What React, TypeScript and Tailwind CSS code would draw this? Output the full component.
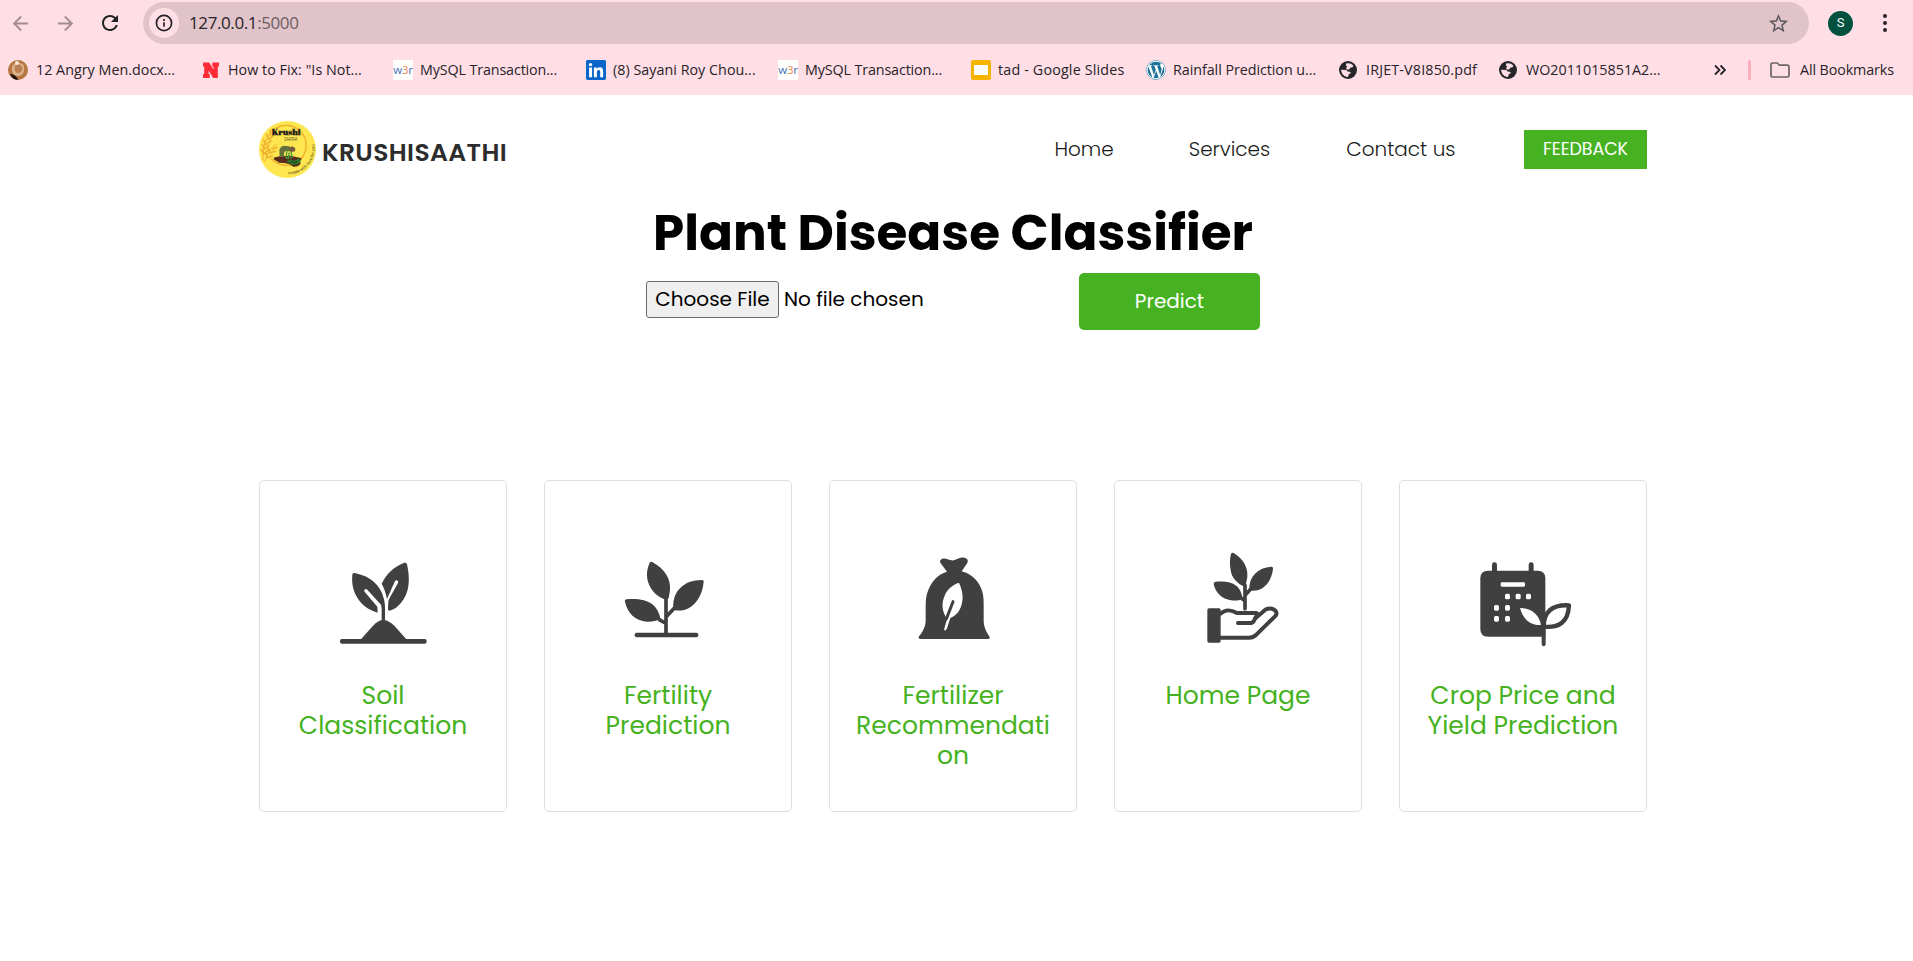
import type { ReactNode } from "react";
import { FaLinkedin, FaWordpress } from "react-icons/fa";
import { MdArrowBack, MdArrowForward, MdRefresh, MdStarOutline } from "react-icons/md";

const INK = "#404040";

/* ---------- bookmark icons ---------- */

function PortraitIcon() {
  return (
    <svg viewBox="0 0 20 20" className="size-5">
      <circle cx="10" cy="10" r="10" fill="#b5763f" />
      <path d="M4 7c1-5 10-6 12-1 1 5-1 10-6 10S3 11 4 7z" fill="#dcb08a" />
      <path d="M7 6c2-3 6-2 7 1s-1 6-4 6-4-4-3-7z" fill="#b98055" />
      <circle cx="9" cy="3" r="2" fill="#f7e8da" />
      <path d="M2 14c3 0 7 2 8 6-4 0-7-3-8-6z" fill="#1d1712" />
    </svg>
  );
}

function NIcon() {
  return (
    <svg viewBox="0 0 20 20" className="size-5">
      <path
        d="M2 2.500h6.200l4.300 7V6.800l-1.200-.6V2.500H18v3.700l-1.200.6V18h-4.600L7.600 10.600v3.200l1.200.6V18H2v-3.600l1.200-.6V6.800L2 6.200z"
        fill="#ff2b36"
      />
    </svg>
  );
}

function W3rIcon() {
  return (
    <span className="flex size-5 items-center justify-center bg-white font-['Open_Sans',sans-serif] text-[11.5px] leading-none tracking-[-0.2px] text-[#4273b8]">
      w<span className="text-[#ee8a50]">3</span>r
    </span>
  );
}

function LinkedinIcon() {
  return (
    <span className="flex size-5 items-center justify-center">
      <span className="flex size-[18px] items-center justify-center rounded-[2px] bg-white">
        <FaLinkedin className="h-[20px] w-[18px] shrink-0 scale-[1.14] text-[#0a66c8]" />
      </span>
    </span>
  );
}

function SlidesIcon() {
  return (
    <svg viewBox="0 0 20 20" className="size-5">
      <rect width="20" height="20" rx="2" fill="#f5b400" />
      <rect x="3" y="5" width="14" height="10" fill="#fff" />
    </svg>
  );
}

function WordpressIcon() {
  return (
    <span className="flex size-5 items-center justify-center rounded-full bg-white">
      <FaWordpress className="size-5 text-[#1d7199]" />
    </span>
  );
}

function GlobeIcon() {
  return (
    <svg viewBox="0 0 20 20" className="size-5">
      <circle cx="10" cy="10" r="9" fill="#26262a" />
      <path
        d="M8.300 3.400c2.700-.7 5.400.1 7 2.200l-.7 1.600-2.400.5-1 1.700H8.700l-.6-1.600 1.300-1.100-1.500-1.300z"
        fill="#ffdfe5"
      />
      <path d="M3.100 9.800l5.300.3 1.600 1.700h2.300l.5 1.500-1.900.8-.9 2.800c-3.700.2-6.700-2.800-6.900-7.100z" fill="#ffdfe5" />
    </svg>
  );
}

interface Bookmark {
  label: string;
  icon: ReactNode;
  box: string;
  text: string;
}

const bookmarks: Bookmark[] = [
  { label: "12 Angry Men.docx...", icon: <PortraitIcon />, box: "w-[193px]", text: "tracking-[0.02px]" },
  { label: 'How to Fix: "Is Not...', icon: <NIcon />, box: "w-[192px]", text: "-ml-px tracking-[0.03px]" },
  { label: "MySQL Transaction...", icon: <W3rIcon />, box: "w-[193px]", text: "-ml-px tracking-[-0.12px]" },
  { label: "(8) Sayani Roy Chou...", icon: <LinkedinIcon />, box: "w-[192px]", text: "-ml-px tracking-[0.03px]" },
  { label: "MySQL Transaction...", icon: <W3rIcon />, box: "w-[193px]", text: "-ml-px tracking-[-0.12px]" },
  { label: "tad - Google Slides", icon: <SlidesIcon />, box: "w-[175px]", text: "-ml-px tracking-[0.17px]" },
  { label: "Rainfall Prediction u...", icon: <WordpressIcon />, box: "w-[192px]", text: "-ml-px tracking-[-0.05px]" },
  { label: "IRJET-V8I850.pdf", icon: <GlobeIcon />, box: "w-[160px]", text: "tracking-[0.17px]" },
  { label: "WO2011015851A2...", icon: <GlobeIcon />, box: "w-[216px]", text: "tracking-normal" },
];

function BrowserBar() {
  return (
    <div className="h-[95px] bg-[#ffdfe5] font-['Segoe_UI','Open_Sans',sans-serif] text-[#28222a]">
      <div className="flex h-[46px] items-center">
        <MdArrowBack className="ml-[9px] size-[23px] text-[#a18d92]" />
        <MdArrowForward className="ml-[22px] size-[23px] text-[#a18d92]" />
        <MdRefresh className="ml-[21px] size-[24px] text-[#202124]" />
        <div className="mr-[19px] ml-[21px] flex h-[42px] flex-1 items-center rounded-full bg-[#e1c4c9] pl-[6px]">
          <span className="flex size-[30px] items-center justify-center rounded-full bg-[#ffdfe5]">
            <svg viewBox="0 0 18 18" className="size-[18px]" fill="none" stroke="#28222a">
              <circle cx="9" cy="9" r="7.600" strokeWidth="1.700" />
              <path d="M9 8.200v4.600M9 5.100v1.800" strokeWidth="1.700" />
            </svg>
          </span>
          <span className="ml-[10px] text-[17px] leading-[24px] tracking-[-0.4px]">
            127.0.0.1<span className="text-[#6d5d62]">:5000</span>
          </span>
          <MdStarOutline className="mr-[19px] ml-auto size-[23px] text-[#5f5a60]" />
        </div>
        <span className="flex size-[25px] items-center justify-center rounded-full bg-[#00513f] font-['Roboto',sans-serif] text-[13px] text-white">
          S
        </span>
        <svg viewBox="0 0 6 20" className="mr-[25px] ml-[29px] h-5 w-[6px]" fill="#28222a">
          <circle cx="3" cy="3" r="2" />
          <circle cx="3" cy="10" r="2" />
          <circle cx="3" cy="17" r="2" />
        </svg>
      </div>
      <div className="flex h-[48px] items-center pl-2 text-[14.3px] leading-[20px]">
        {bookmarks.map((b, i) => (
          <div key={i} className={`flex shrink-0 items-center gap-2 whitespace-nowrap ${b.box}`}>
            {b.icon}
            <span className={b.text}>{b.label}</span>
          </div>
        ))}
        <svg viewBox="0 0 12 12" className="size-3" fill="none" stroke="#28222a" strokeWidth="1.800">
          <path d="M1 1.500l4.500 4.500L1 10.500M6.500 1.500L11 6l-4.500 4.500" />
        </svg>
        <span className="ml-[22px] h-5 w-[3px] rounded-full bg-[#ffacbb]" />
        <svg
          viewBox="0 0 20 16"
          className="ml-[19px] h-4 w-5"
          fill="none"
          stroke="#6d6468"
          strokeWidth="1.700"
          strokeLinejoin="round"
        >
          <path d="M1 2.600Q1 1 2.600 1h4.800l2 2.200h8Q19 3.200 19 4.800v8.600Q19 15 17.400 15H2.600Q1 15 1 13.400z" />
        </svg>
        <span className="ml-[10px] tracking-[-0.1px] whitespace-nowrap">All Bookmarks</span>
      </div>
    </div>
  );
}

/* ---------- site header ---------- */

function Logo() {
  return (
    <svg viewBox="0 0 171 171" className="size-[57px]">
      <defs>
        <path id="motto" d="M88 160A78 78 0 0 0 162 55" />
      </defs>
      <circle cx="85.500" cy="85.500" r="85.500" fill="#fee650" />
      <path d="M50 22A60 60 0 1 1 36 112" fill="none" stroke="#efac2c" strokeWidth="4" />
      <g fill="none" stroke="#efb02f" strokeWidth="5" strokeLinecap="round">
        <path d="M12 118C10 82 20 50 44 24" strokeWidth="3" />
        <path d="M14 98l-7-12M15 84l-5-14M19 70l-5-14M27 54l-4-14M35 42l-1-14" />
        <path d="M15 98l13-11M17 84l13-11M23 70l13-11M31 54l12-10" />
        <path d="M18 122C24 100 34 82 52 70" strokeWidth="3" />
        <path d="M24 108l-3-12M32 94l-3-12M25 110l14-5M33 96l15-5M41 84l13-5" />
      </g>
      <path
        d="M44 110q18-6 32-5l20-1 18 5q14 1 14 6-2 4-12 4l10 8-8 8-14 3-12-8-16-4q-24 1-20-5-14-4-12-11z"
        fill="#5a2b1c"
      />
      <path d="M62 108l-1-20q2-12 14-14l16 2 6 6-3 10-12-3-6 4-2 15z" fill="#66703a" />
      <path d="M84 90l-3 20 7 2 3-18M96 90l3 18-6 3" fill="none" stroke="#3f9a3c" strokeWidth="4" />
      <path d="M90 80l10-4 9 6-1 9-11 2z" fill="#77573b" />
      <path d="M82 122l12-7 12 5 14-8 6 8-9 9-16 2z" fill="#2c7a2b" />
      <path d="M92 126l8-5 6 6 9-6" fill="none" stroke="#1d3a17" strokeWidth="3" />
      <text
        x="38"
        y="43"
        textLength="87"
        lengthAdjust="spacingAndGlyphs"
        fontFamily="'Abril Fatface','DejaVu Serif',serif"
        fontWeight="700"
        fontSize="24"
        fill="#26241a"
      >
        Krushi
      </text>
      <text x="75" y="60" textLength="39" fontFamily="Poppins,sans-serif" fontSize="13" fill="#5b5528">
        SAATHI
      </text>
      <text fontFamily="Poppins,sans-serif" fontSize="12" fontWeight="500" fill="#6e6524">
        <textPath href="#motto" textLength="136">
          made with love for you
        </textPath>
      </text>
    </svg>
  );
}

function SiteHeader() {
  return (
    <header className="flex h-[57px] items-center">
      <Logo />
      <span className="ml-[6px] pt-[6px] text-[25px] leading-[30px] font-semibold tracking-[0.38px] text-[#2d2d2d]">
        KRUSHISAATHI
      </span>
      <nav className="ml-auto flex items-center pb-[2px] text-[20px] leading-[30px] font-light text-[#1a1a1a]">
        <a className="mr-[75px]">Home</a>
        <a className="mr-[76px]">Services</a>
        <a className="mr-[68.5px]">Contact us</a>
      </nav>
      <a className="flex h-[39px] w-[123px] items-center justify-center bg-[#46b222] pb-[2px] text-[17.5px] leading-[26px] tracking-[-0.1px] text-white">
        FEEDBACK
      </a>
    </header>
  );
}

/* ---------- service icons ---------- */

function SoilIcon() {
  return (
    <svg viewBox="-6 0 390 360" className="h-[120px] w-[130px]">
      <g fill={INK}>
        <path d="M97 104q0-6 7-5c46 9 78 36 87 76 3 10 4 20 4 30v36h-10v-36l-2-11-41-45q-6-4-9 1-1 4 2 7l37 43 1 18c-28-8-51-25-64-50-11-20-14-42-12-64z" />
        <path d="M253 68q6-1 8 5c10 45 8 87-19 117-9 11-20 19-33 22q-6 0-5-6l1-20c0-5 3-9 5-14l24-43q2-6-3-8-4-1-7 4l-23 52c-4-19-9-34-16-46 14-28 35-51 68-63z" />
        <path d="M123 298l36-41q16-17 31-17t33 17l36 41z" />
        <rect x="60" y="297" width="260" height="14" rx="6" />
      </g>
    </svg>
  );
}

function FertilityIcon() {
  return (
    <svg viewBox="9 0 390 360" className="h-[120px] w-[130px]">
      <g fill={INK}>
        <path d="M149 68q3-5 8-2c36 20 56 50 53 83q-2 15-4 26l-10 4c-32-12-49-36-54-62-3-17 0-33 7-49z" />
        <path d="M305 120q7-1 6 6c-4 43-26 74-58 84-12 3-23 2-33-1-2-24 3-46 18-62 17-19 40-27 67-27z" />
        <path d="M75 185q-2-6 5-7c30-3 59 1 77 15 14 11 20 26 25 44-14 6-27 9-42 8-34-3-58-26-65-60z" />
        <rect x="104" y="278" width="191" height="14" rx="6" />
      </g>
      <path d="M198 172v110M176 238l22 12M224 203l-24 26" fill="none" stroke={INK} strokeWidth="11" />
    </svg>
  );
}

function FertilizerIcon() {
  return (
    <svg viewBox="-6 0 390 360" className="h-[120px] w-[130px]">
      <path
        d="M151 68q-3-9 6-12c14-3 24 9 37 4 13-4 17-9 29-7 13 2 12 13 7 19l-15 22c32 9 55 32 63 65 3 13 3 27 3 42v39c0 20 7 34 17 49q4 8-4 8H92q-9 0-5-8c13-16 20-30 20-50v-38c0-20 1-35 8-51 10-26 28-47 56-55z"
        fill={INK}
      />
      <path
        d="M204 129q4-1 5 4c8 20 12 39 6 60-5 20-16 34-34 41l-10 31q-4 10-9 4l9-32c-16-24-17-49-7-70 7-17 22-31 40-38z"
        fill="#fff"
      />
      <path d="M189 185l-20 52" stroke={INK} strokeWidth="9" strokeLinecap="round" />
    </svg>
  );
}

function HandIcon() {
  return (
    <svg viewBox="-21 0 390 360" className="h-[120px] w-[130px]">
      <g fill={INK}>
        <path d="M153 41q3-5 8-2c28 17 44 43 41 72l-6 30c-24-9-41-27-44-50-3-18-3-34 1-50z" />
        <path d="M273 80q7-1 6 6c-4 35-22 58-47 65-8 2-16 2-24 0-1-20 4-37 17-50 12-13 29-20 48-21z" />
        <path d="M101 133q-1-7 6-8c27-2 49 1 64 14 10 9 14 22 17 38-10 4-22 6-35 4-27-4-46-22-52-48z" />
        <rect x="82" y="205" width="40" height="103" rx="5" />
      </g>
      <g fill="none" stroke={INK} strokeWidth="11" strokeLinecap="round" strokeLinejoin="round">
        <path d="M195 136v70M183 174l12 8M211 148l-14 16" />
        <path d="M121 221c18-16 34-11 50-2h57q5 1 3 6l-9 17q-4 7-12 7h-36" strokeWidth="12" />
        <path d="M226 235l30-26c14-6 28-4 33 8q2 6-4 12l-56 55q-10 9-21 9h-87" strokeWidth="12" />
      </g>
    </svg>
  );
}

function CalendarIcon() {
  return (
    <svg viewBox="-6 0 390 360" className="h-[120px] w-[130px]">
      <g fill={INK}>
        <rect x="96" y="67" width="15" height="40" rx="7" />
        <rect x="206" y="67" width="15" height="40" rx="7" />
        <path d="M84 92h149q23 0 23 23v175H84q-23 0-23-23V115q0-23 23-23z" />
        <path d="M245 250h12v62q-1 7-6 7t-6-7z" />
      </g>
      <g fill="#fff">
        <rect x="122" y="127" width="73" height="13" rx="4" />
        {[143, 175, 206].map((x) => (
          <rect key={x} x={x - 8} y="161" width="15" height="17" rx="5" />
        ))}
        {[110, 143].map((x) => (
          <rect key={x} x={x - 8} y="195" width="15" height="17" rx="5" />
        ))}
        {[110, 143].map((x) => (
          <rect key={x} x={x - 8} y="228" width="15" height="17" rx="5" />
        ))}
        <path d="M180 204c31 0 57 18 63 51-33 2-54-18-63-51z" />
      </g>
      <path
        d="M251 260c0-43 24-67 76-64-3 50-28 68-76 64z"
        fill="#fff"
        stroke={INK}
        strokeWidth="13"
        strokeLinejoin="round"
      />
    </svg>
  );
}

const services: { title: ReactNode; icon: ReactNode }[] = [
  { title: "Soil Classification", icon: <SoilIcon /> },
  { title: "Fertility Prediction", icon: <FertilityIcon /> },
  { title: "Fertilizer Recommendation", icon: <FertilizerIcon /> },
  { title: "Home Page", icon: <HandIcon /> },
  { title: "Crop Price and Yield Prediction", icon: <CalendarIcon /> },
];

export default function App() {
  return (
    <div className="h-[961px] w-full overflow-hidden bg-white">
      <BrowserBar />
      <div className="ml-[259px] w-[1388px] pt-[26px] font-['Poppins',sans-serif]">
        <SiteHeader />
        <h1 className="mt-[25px] text-center text-[50px] leading-[60px] font-bold text-black">
          Plant Disease Classifier
        </h1>
        <form className="mt-[10px] ml-[387px] flex items-start text-[20px] leading-[30px] text-black">
          <button
            type="button"
            className="mt-2 flex h-[37px] w-[133px] items-center justify-center rounded-[3px] border border-[#6b6b6b] bg-[#efefef] pb-[2px]"
          >
            Choose File
          </button>
          <span className="mt-[11px] ml-[5px] w-[295px]">No file chosen</span>
          <button
            type="button"
            className="flex h-[57px] w-[181px] items-center justify-center rounded-[5px] bg-[#46b222] pb-[2px] text-white"
          >
            Predict
          </button>
        </form>
        <main className="mt-[150px] grid grid-cols-5 gap-[37px]">
          {services.map((s, i) => (
            <a
              key={i}
              className="flex h-[332px] flex-col items-center rounded-[5px] border border-[#dfdfdf] pt-[59px]"
            >
              {s.icon}
              <h2 className="mt-[21px] w-[198px] text-center text-[25px] leading-[30px] wrap-break-word text-[#46b222]">
                {s.title}
              </h2>
            </a>
          ))}
        </main>
      </div>
    </div>
  );
}
